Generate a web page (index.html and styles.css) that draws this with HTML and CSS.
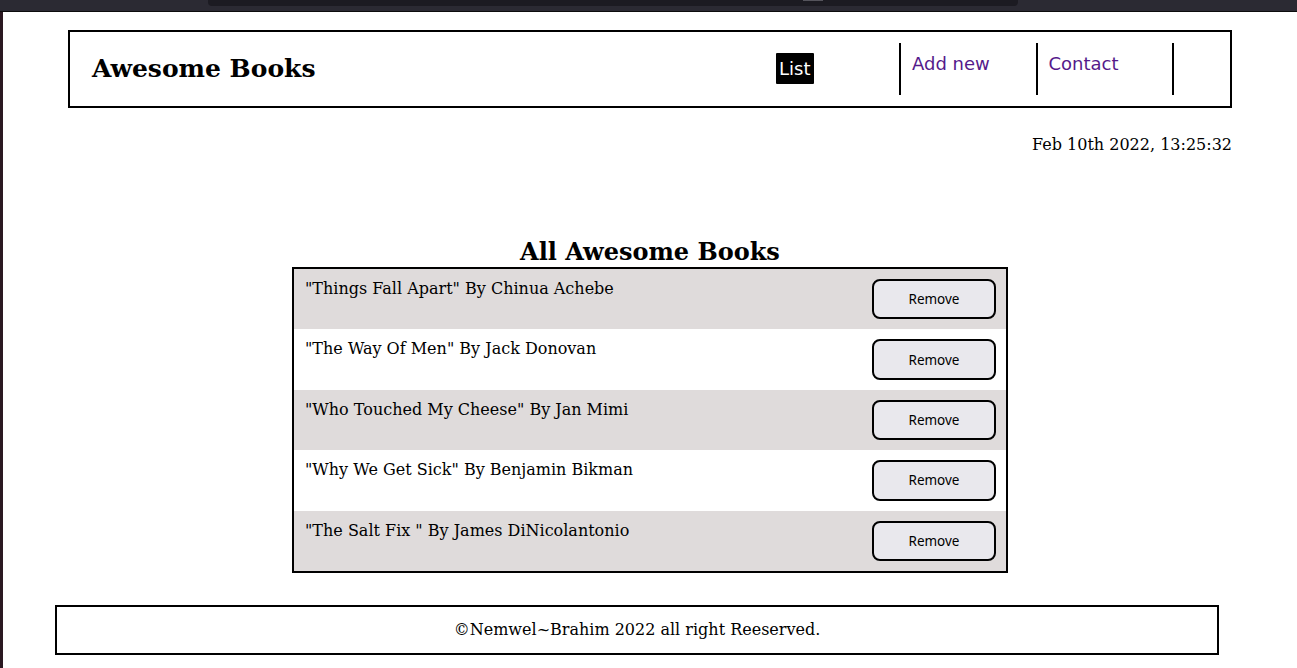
FILE: index.html
```html
<!DOCTYPE html>
<html lang="en">
<head>
<meta charset="utf-8">
<title>Awesome Books</title>
<link rel="stylesheet" href="styles.css">
</head>
<body>
<div class="chrome">
  <div class="chrome-bar"><span class="chrome-thumb"></span></div>
</div>
<div class="window">
  <div class="edge"></div>
  <div class="page">
    <header class="header">
      <h1 class="brand">Awesome Books</h1>
      <nav>
        <ul class="nav">
          <li class="nav-item"><button class="nav-active">List</button></li>
          <li class="nav-item"><a class="nav-link" href="#add">Add new</a></li>
          <li class="nav-item"><a class="nav-link" href="#contact">Contact</a></li>
        </ul>
      </nav>
    </header>
    <p class="date">Feb 10th 2022, 13:25:32</p>
    <main class="books">
      <h2 class="books-title">All Awesome Books</h2>
      <ul class="book-list">
        <li class="book odd"><span class="book-text">"Things Fall Apart" By Chinua Achebe</span><button class="remove">Remove</button></li>
        <li class="book"><span class="book-text">"The Way Of Men" By Jack Donovan</span><button class="remove">Remove</button></li>
        <li class="book odd"><span class="book-text">"Who Touched My Cheese" By Jan Mimi</span><button class="remove">Remove</button></li>
        <li class="book"><span class="book-text">"Why We Get Sick" By Benjamin Bikman</span><button class="remove">Remove</button></li>
        <li class="book odd"><span class="book-text">"The Salt Fix " By James DiNicolantonio</span><button class="remove">Remove</button></li>
      </ul>
    </main>
    <footer class="footer">©Nemwel~Brahim 2022 all right Reeserved.</footer>
  </div>
</div>
</body>
</html>
```
FILE: styles.css
```css
html, body {
  margin: 0;
  padding: 0;
  background: #ffffff;
}

body {
  font-family: "DejaVu Serif", serif;
  font-size: 16px;
  color: #000;
  height: 668px;
  overflow: hidden;
  display: flex;
  flex-direction: column;
}

.chrome {
  height: 11px;
  background: #2b2a33;
  border-bottom: 1px solid #0c0c0d;
  flex: none;
  padding-left: 208px;
}

.chrome-bar {
  width: 810px;
  height: 6px;
  background: #1c1b22;
  border-radius: 0 0 4px 4px;
  display: flex;
  justify-content: center;
}

.chrome-thumb {
  width: 20px;
  height: 1px;
  background: #55545c;
  margin-left: 400px;
}

.window {
  flex: 1;
  display: flex;
}

.edge {
  width: 3px;
  background: #2a1821;
  flex: none;
}

.page {
  flex: 1;
  display: flex;
  flex-direction: column;
  align-items: center;
}

.header {
  width: 1164px;
  height: 78px;
  box-sizing: border-box;
  margin-top: 18px;
  border: 2px solid #000;
  display: flex;
  align-items: flex-start;
  justify-content: space-between;
  padding: 0 56px 0 22px;
}

.brand {
  margin: 21px 0 0;
  font-size: 25px;
  font-weight: bold;
  line-height: 32px;
}

.nav {
  list-style: none;
  margin: 11px 0 0;
  padding: 0;
  display: flex;
}

.nav-item {
  width: 136.5px;
  height: 52px;
  box-sizing: border-box;
  border-right: 2px solid #000;
  padding: 0 0 0 11px;
  font-family: "DejaVu Sans", sans-serif;
  font-size: 18px;
}

.nav-active {
  margin-top: 10px;
  background: #000;
  color: #fff;
  border: 0;
  border-radius: 1px;
  padding: 5px 3.5px;
  font-family: "DejaVu Sans", sans-serif;
  font-size: 18px;
  line-height: 21px;
}

.nav-link {
  display: inline-block;
  margin-top: 10px;
  line-height: 21px;
  color: #551a8b;
  text-decoration: none;
}

.date {
  width: 1164px;
  margin: 27px 0 0;
  text-align: right;
  line-height: 19px;
}

.books {
  width: 716px;
  margin-top: 83px;
  display: flex;
  flex-direction: column;
  align-items: center;
}

.books-title {
  margin: 0;
  font-size: 24px;
  line-height: 30px;
  font-weight: bold;
}

.book-list {
  list-style: none;
  margin: 0;
  padding: 0;
  width: 100%;
  box-sizing: border-box;
  border: 2px solid #000;
}

.book {
  display: flex;
  justify-content: space-between;
  align-items: flex-start;
  padding: 10px 10px 10px 11px;
  background: #fff;
}

.book.odd {
  background: #dfdbdb;
}

.book-text {
  line-height: 19px;
}

.remove {
  width: 124px;
  height: 40.4px;
  box-sizing: border-box;
  border: 2px solid #000;
  border-radius: 8px;
  background: #e9e8ed;
  font-family: "Noto Sans", "Open Sans", sans-serif;
  font-size: 13.5px;
  color: #000;
  padding: 0;
}

.footer {
  width: 1164px;
  height: 50px;
  box-sizing: border-box;
  margin: 32px 26px 0 0;
  border: 2px solid #000;
  display: flex;
  align-items: center;
  justify-content: center;
}
```
